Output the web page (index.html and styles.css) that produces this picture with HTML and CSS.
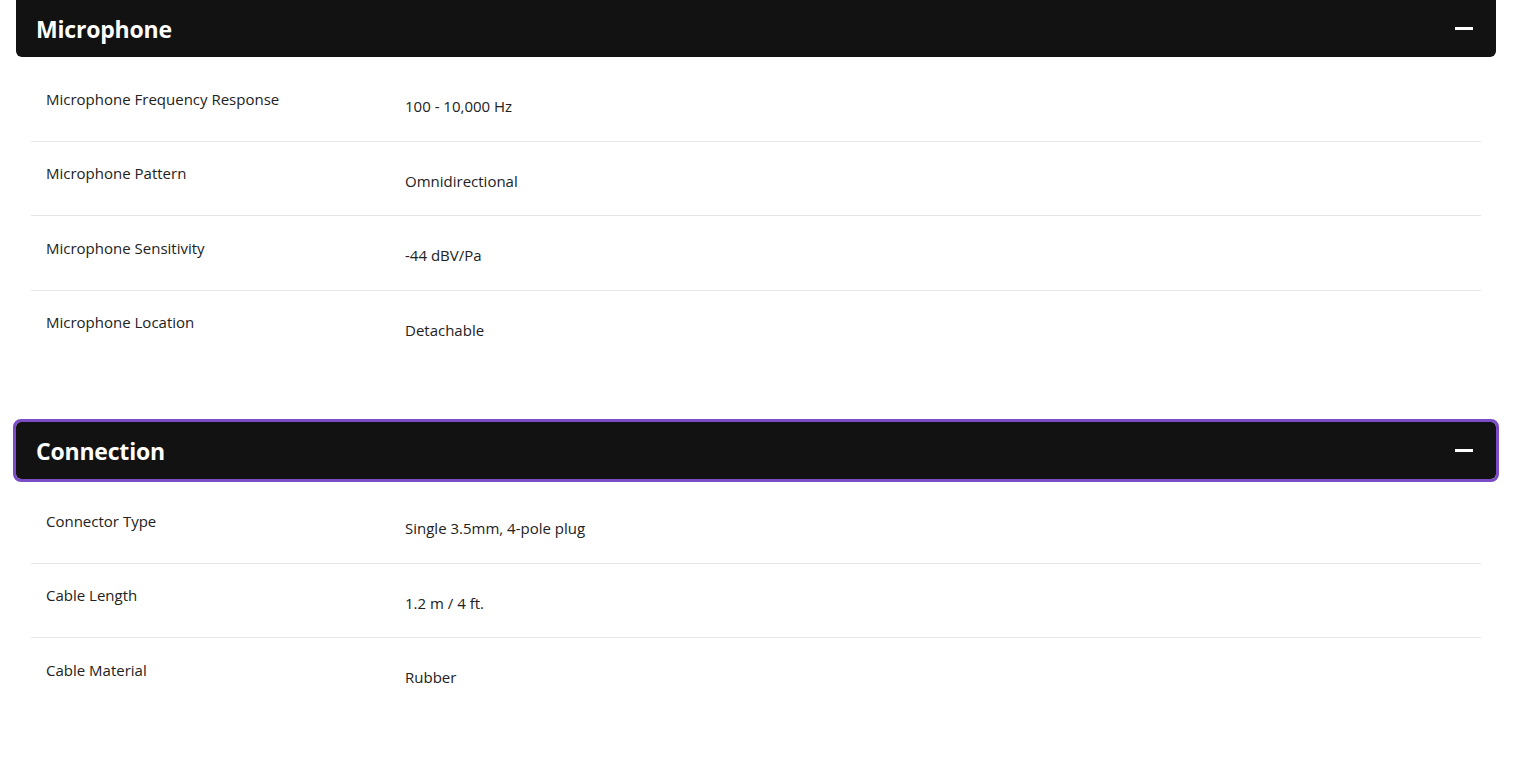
FILE: index.html
```html
<!DOCTYPE html>
<html lang="en">
<head>
    <meta charset="UTF-8">
    <meta name="viewport" content="width=device-width, initial-scale=1.0">
    <title>Specs</title>
    <link rel="stylesheet" href="styles.css">
</head>
<body>
    <div class="specs">
        <section class="spec-group">
            <button class="spec-head">
                <span class="spec-title">Microphone</span>
                <span class="spec-toggle"></span>
            </button>
            <div class="spec-body">
                <div class="spec-row">
                    <div class="spec-label">Microphone Frequency Response</div>
                    <div class="spec-value">100 - 10,000 Hz</div>
                </div>
                <div class="spec-row">
                    <div class="spec-label">Microphone Pattern</div>
                    <div class="spec-value">Omnidirectional</div>
                </div>
                <div class="spec-row">
                    <div class="spec-label">Microphone Sensitivity</div>
                    <div class="spec-value">-44 dBV/Pa</div>
                </div>
                <div class="spec-row">
                    <div class="spec-label">Microphone Location</div>
                    <div class="spec-value">Detachable</div>
                </div>
            </div>
        </section>

        <section class="spec-group">
            <button class="spec-head focused">
                <span class="spec-title">Connection</span>
                <span class="spec-toggle"></span>
            </button>
            <div class="spec-body">
                <div class="spec-row">
                    <div class="spec-label">Connector Type</div>
                    <div class="spec-value">Single 3.5mm, 4-pole plug</div>
                </div>
                <div class="spec-row">
                    <div class="spec-label">Cable Length</div>
                    <div class="spec-value">1.2 m / 4 ft.</div>
                </div>
                <div class="spec-row">
                    <div class="spec-label">Cable Material</div>
                    <div class="spec-value">Rubber</div>
                </div>
            </div>
        </section>
    </div>
</body>
</html>
```

FILE: styles.css
```css
body {
    margin: 0;
    padding: 0;
    background: #ffffff;
    font-family: 'Open Sans', 'Noto Sans', sans-serif;
    color: #222222;
}
.specs {
    width: 1480px;
    margin-left: 16px;
    display: flex;
    flex-direction: column;
    gap: 49px;
}
.spec-head {
    display: flex;
    justify-content: space-between;
    align-items: center;
    width: 100%;
    height: 57px;
    padding: 0 23px 0 20px;
    box-sizing: border-box;
    background: #121212;
    color: #ffffff;
    border: none;
    border-radius: 0 0 6px 6px;
    font-family: inherit;
    cursor: pointer;
}
.spec-head.focused {
    border-radius: 5px;
    outline: 3px solid #7a4cc6;
    outline-offset: 0;
}
.spec-title {
    font-size: 23px;
    font-weight: 700;
    letter-spacing: -0.2px;
}
.spec-toggle {
    width: 18px;
    height: 3px;
    background: #ffffff;
}
.spec-body {
    padding: 10px 15px 9px;
}
.spec-row {
    display: grid;
    grid-template-columns: 359px 1fr;
    border-bottom: 1px solid #e6e6e6;
    font-size: 15px;
    line-height: 22px;
}
.spec-row:last-child {
    border-bottom: none;
}
.spec-label {
    padding: 20.5px 15px 0;
}
.spec-value {
    padding: 28px 15px 23.5px;
}
```
